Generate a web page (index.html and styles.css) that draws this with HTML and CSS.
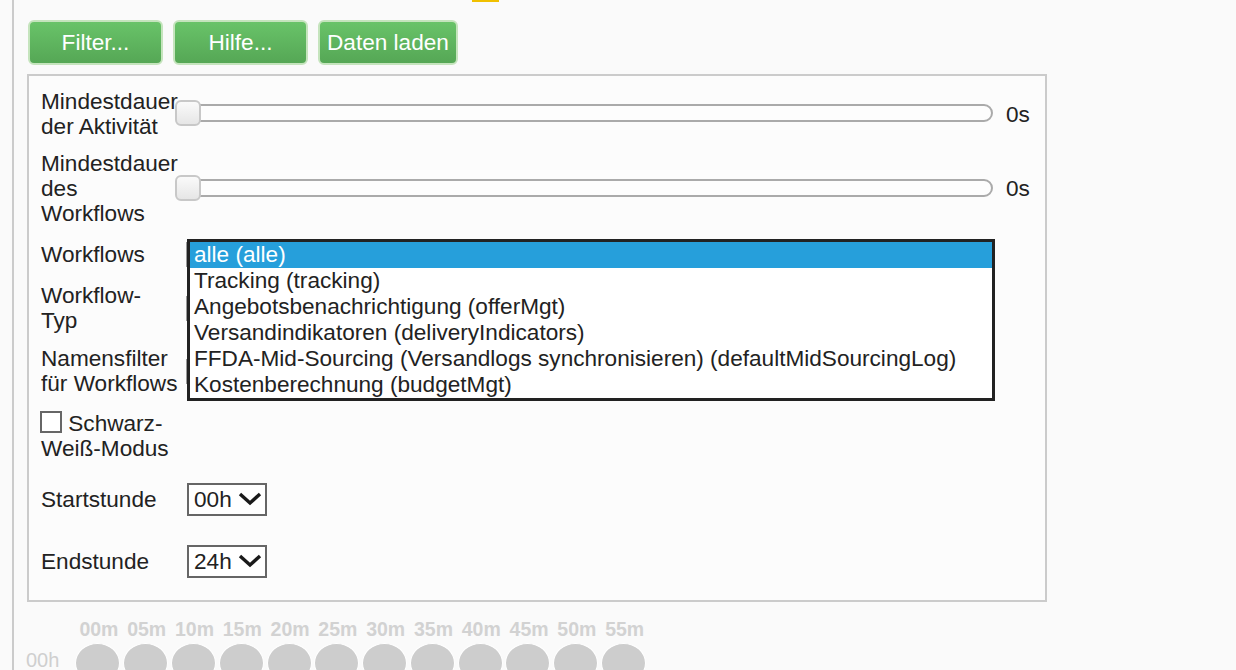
FILE: index.html
```html
<!DOCTYPE html>
<html lang="de">
<head>
<meta charset="utf-8">
<title>Filter</title>
<link rel="stylesheet" href="styles.css">
</head>
<body>
<div class="topmark"></div>
<div class="page">
  <div class="toolbar">
    <button class="btn btn-wide">Filter...</button>
    <button class="btn btn-wide">Hilfe...</button>
    <button class="btn">Daten laden</button>
  </div>

  <div class="panel">
    <div class="row row-1">
      <div class="label">Mindestdauer der Aktivität</div>
      <div class="slider"><div class="track"></div><div class="thumb"></div></div>
      <div class="value">0s</div>
    </div>
    <div class="row row-2">
      <div class="label">Mindestdauer des Workflows</div>
      <div class="slider"><div class="track"></div><div class="thumb"></div></div>
      <div class="value">0s</div>
    </div>
    <div class="row row-3">
      <div class="label">Workflows</div>
      <div class="field"></div>
    </div>
    <div class="row row-4">
      <div class="label">Workflow-<br>Typ</div>
      <div class="field"></div>
    </div>
    <div class="row row-5">
      <div class="label">Namensfilter für Workflows</div>
      <div class="field"></div>
    </div>
    <div class="row row-6">
      <div class="label check-label"><span class="checkbox"></span> Schwarz-<br>Weiß-Modus</div>
    </div>
    <div class="row row-7">
      <div class="label">Startstunde</div>
      <div class="hour-select">00h
        <svg class="chev" width="24" height="14" viewBox="0 0 24 14"><polyline points="2,2 12,11 22,2" fill="none" stroke="#1a1a1a" stroke-width="3.4"/></svg>
      </div>
    </div>
    <div class="row row-8">
      <div class="label">Endstunde</div>
      <div class="hour-select">24h
        <svg class="chev" width="24" height="14" viewBox="0 0 24 14"><polyline points="2,2 12,11 22,2" fill="none" stroke="#1a1a1a" stroke-width="3.4"/></svg>
      </div>
    </div>

    <ul class="dropdown">
      <li class="opt selected">alle (alle)</li>
      <li class="opt">Tracking (tracking)</li>
      <li class="opt">Angebotsbenachrichtigung (offerMgt)</li>
      <li class="opt">Versandindikatoren (deliveryIndicators)</li>
      <li class="opt">FFDA-Mid-Sourcing (Versandlogs synchronisieren) (defaultMidSourcingLog)</li>
      <li class="opt">Kostenberechnung (budgetMgt)</li>
    </ul>
  </div>

  <div class="timeline">
    <div class="min-row">
      <div class="min">00m</div><div class="min">05m</div><div class="min">10m</div><div class="min">15m</div>
      <div class="min">20m</div><div class="min">25m</div><div class="min">30m</div><div class="min">35m</div>
      <div class="min">40m</div><div class="min">45m</div><div class="min">50m</div><div class="min">55m</div>
    </div>
    <div class="dot-row">
      <div class="hour">00h</div>
      <div class="dot"></div><div class="dot"></div><div class="dot"></div><div class="dot"></div>
      <div class="dot"></div><div class="dot"></div><div class="dot"></div><div class="dot"></div>
      <div class="dot"></div><div class="dot"></div><div class="dot"></div><div class="dot"></div>
    </div>
  </div>
</div>
</body>
</html>
```
FILE: styles.css
```css
html, body {
  margin: 0;
  padding: 0;
  height: 100%;
  overflow: hidden;
}
body {
  background: #fafafa;
  font-family: "Liberation Sans", Arial, sans-serif;
  color: #222;
  position: relative;
}
.topmark {
  position: absolute;
  left: 472px;
  top: 0;
  width: 27px;
  height: 2px;
  background: #f0c000;
}
.page {
  margin-left: 12px;
  border-left: 2px solid #cbcbcb;
  padding-left: 13px;
  padding-top: 20px;
  height: 100%;
  box-sizing: border-box;
}
.toolbar {
  display: flex;
  gap: 10px;
  margin-left: 1px;
}
.btn {
  font-family: "Liberation Sans", Arial, sans-serif;
  font-size: 22.6px;
  color: #fff;
  height: 45px;
  padding: 0 7px;
  border: 2px solid #c5e4bd;
  border-radius: 6px;
  background: linear-gradient(#69c369, #55a755);
  line-height: 40px;
}
.btn-wide {
  width: 135px;
}
.panel {
  position: relative;
  margin-top: 9px;
  width: 1020px;
  height: 528px;
  box-sizing: border-box;
  border: 2px solid #cbcbcb;
  background: #fcfcfc;
  padding: 13px 0 0 12px;
}
.row {
  display: flex;
  align-items: center;
  font-size: 22.6px;
  line-height: 25px;
}
.row-2 { margin-top: 12px; }
.row-3 { margin-top: 16px; }
.row-4 { margin-top: 16px; }
.row-5 { margin-top: 13px; }
.row-6 { margin-top: 15px; }
.row-7 { margin-top: 22px; }
.row-8 { margin-top: 29px; }
.label {
  width: 138px;
  margin-right: -4px;
  flex: none;
}
.slider {
  position: relative;
  width: 818px;
  height: 26px;
  margin-top: -2px;
  flex: none;
}
.track {
  position: absolute;
  left: 0;
  right: 0;
  top: 4px;
  height: 18px;
  box-sizing: border-box;
  border: 2px solid #aaa;
  border-radius: 9px;
  background: #fdfdfd;
}
.thumb {
  position: absolute;
  left: 0;
  top: 0;
  width: 26px;
  height: 26px;
  box-sizing: border-box;
  border: 2px solid #c8c8c8;
  border-radius: 6px;
  background: linear-gradient(#fafafa, #e6e6e6);
}
.value {
  margin-left: 13px;
}
.field {
  margin-left: 11px;
  width: 200px;
  height: 25px;
  box-sizing: border-box;
  border: 2px solid #999;
  background: #fff;
}
.check-label {
  width: auto;
}
.checkbox {
  display: inline-block;
  width: 22px;
  height: 22px;
  box-sizing: border-box;
  border: 2px solid #666;
  background: #fff;
  vertical-align: -2px;
  margin-left: -1px;
}
.hour-select {
  margin-left: 12px;
  width: 80px;
  height: 33px;
  box-sizing: border-box;
  border: 2px solid #666;
  background: #fff;
  line-height: 29px;
  padding-left: 5px;
  display: flex;
  align-items: center;
  gap: 6px;
}
.chev {
  margin-top: -2px;
}
.dropdown {
  position: absolute;
  left: 158px;
  top: 163px;
  width: 802px;
  margin: 0;
  padding: 0;
  list-style: none;
  border: 3px solid #222;
  background: #fff;
  font-size: 22.6px;
}
.opt {
  height: 26px;
  line-height: 26px;
  padding-left: 4px;
  white-space: nowrap;
}
.opt.selected {
  background: #269fdb;
  color: #fff;
}
.timeline {
  margin-top: 16px;
}
.min-row {
  display: flex;
  padding-left: 48px;
  height: 25px;
}
.min {
  width: 47.8px;
  text-align: center;
  font-weight: bold;
  font-size: 19.5px;
  line-height: 22px;
  color: #d2d2d2;
}
.dot-row {
  display: flex;
  align-items: flex-start;
}
.hour {
  width: 48px;
  margin-left: -1px;
  color: #cfcfcf;
  font-size: 20px;
  padding-top: 6px;
}
.dot {
  width: 45px;
  height: 40px;
  margin: 0 1.4px;
  box-sizing: border-box;
  border: 1px solid #fff;
  border-radius: 50%;
  background: #cdcdcd;
  flex: none;
}
```
